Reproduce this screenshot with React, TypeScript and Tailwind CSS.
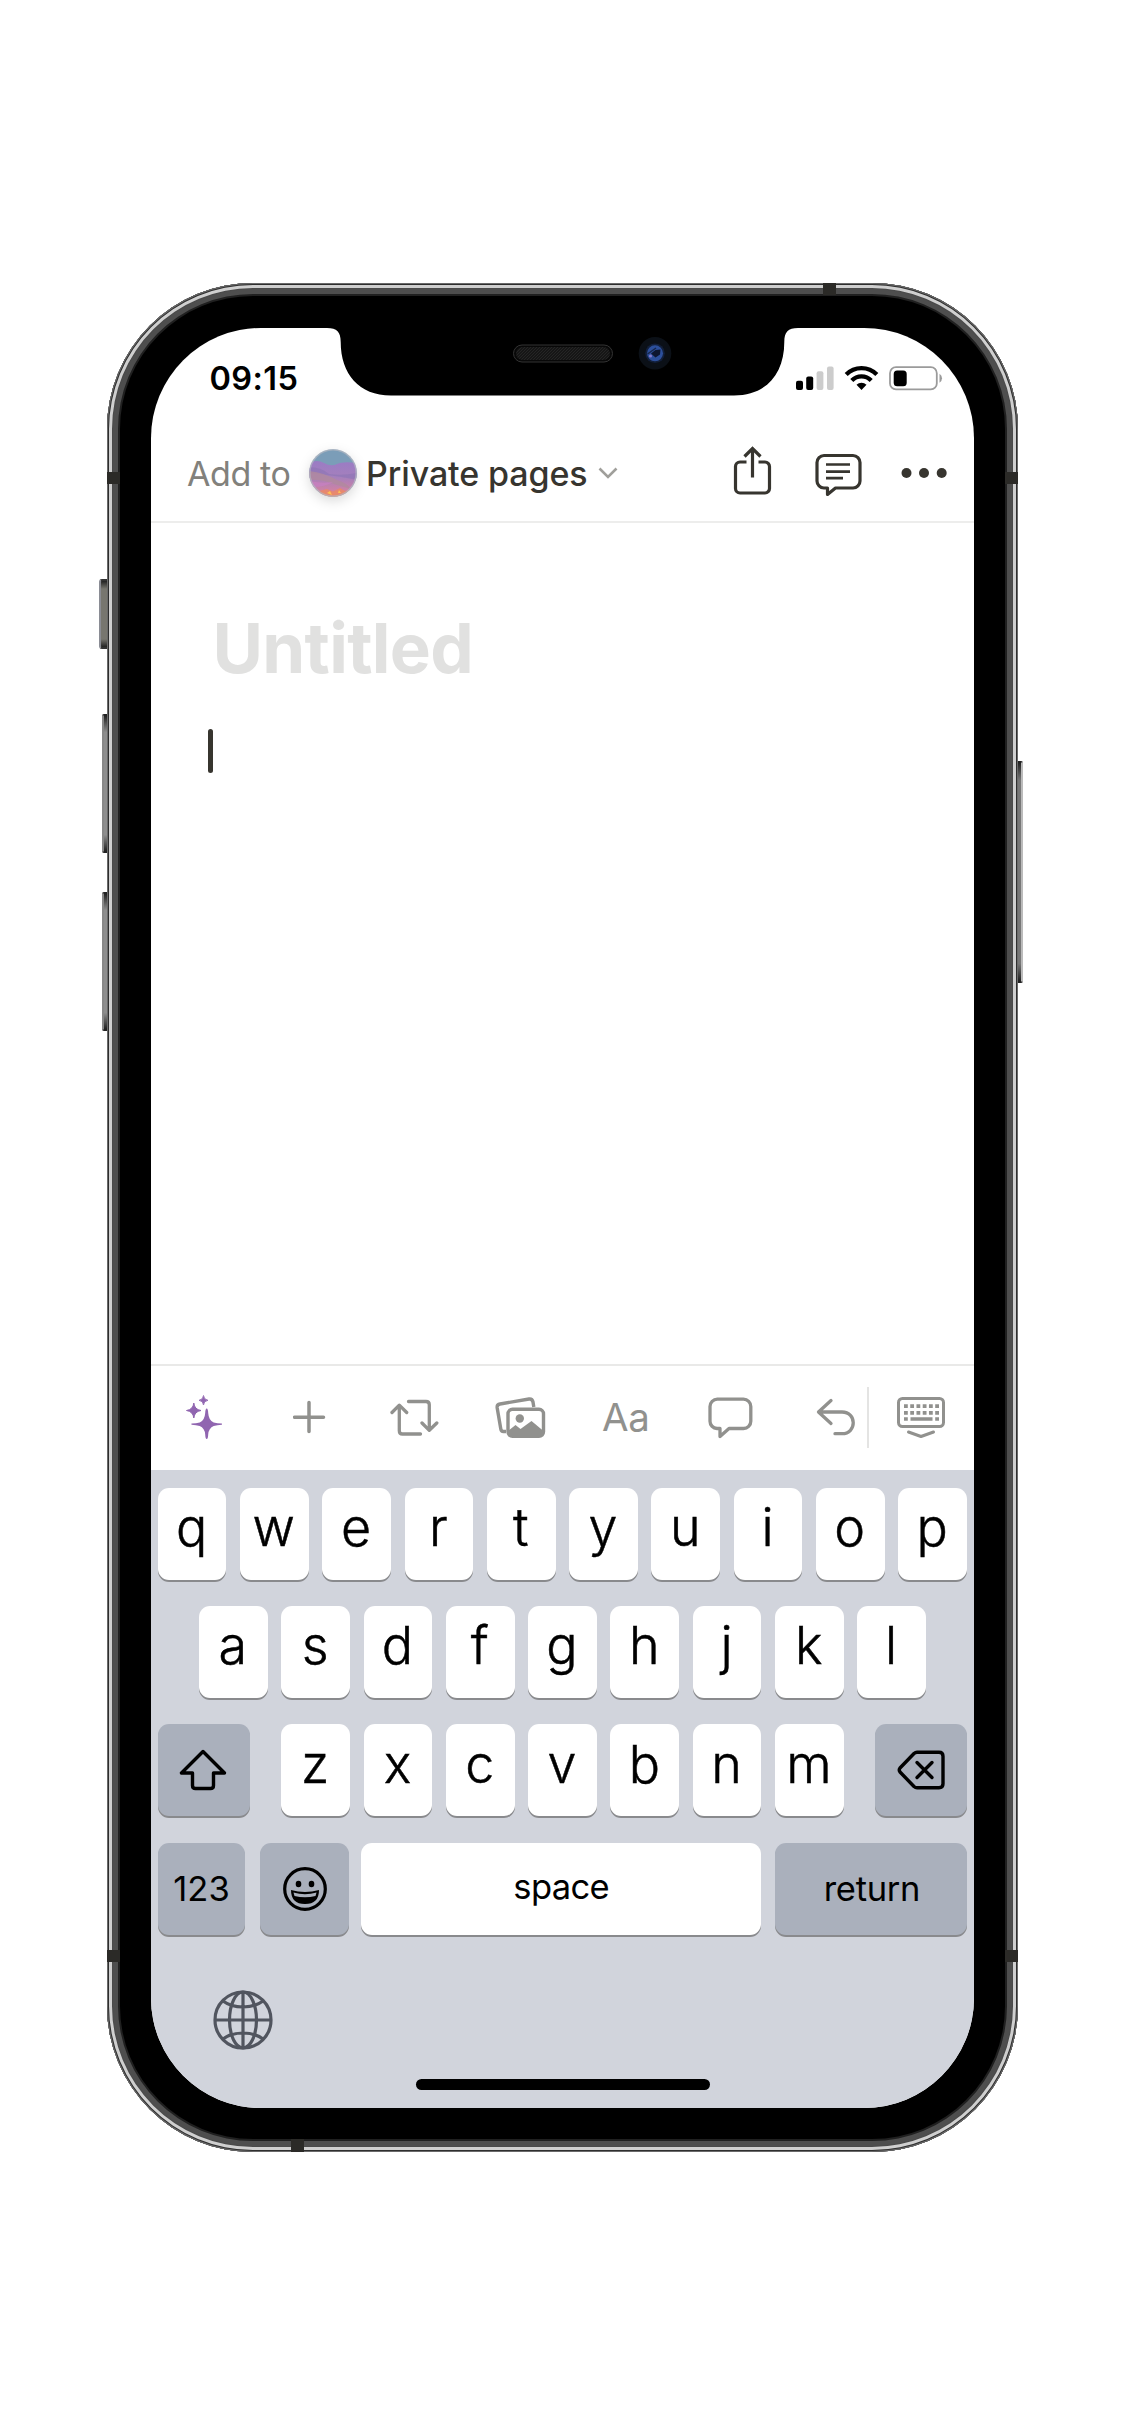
import React from "react";

const FRAME =
  "shadow-[inset_0_0_0_1px_#6a6a6a,inset_0_0_0_2px_#2e2e2e,inset_0_0_0_5px_#cfcfcf,inset_0_0_0_6px_#4a4a4a,inset_0_0_0_11px_#4e4e4e,inset_0_0_0_13px_#202020]";

function Notch() {
  return (
    <svg className="absolute left-0 top-0" width="823" height="69" viewBox="0 0 823 69">
      <path
        d="M170 0H176C186 0 189.7 4 189.7 14C189.7 46 208 67.5 240 67.5H583C615 67.5 633.3 46 633.3 14C633.3 4 637 0 647 0H653V-2H170Z"
        fill="#000"
      />
      <defs>
        <pattern id="mesh" width="3" height="3" patternUnits="userSpaceOnUse">
          <rect width="3" height="3" fill="#161616" />
          <path d="M0 3L3 0" stroke="#2a2a2a" strokeWidth="0.8" />
        </pattern>
      </defs>
      <rect x="362.500" y="17" width="99" height="17" rx="8.500" fill="#080808" stroke="#333" />
      <rect x="365" y="19" width="94" height="13" rx="6.500" fill="url(#mesh)" />
      <circle cx="504" cy="25.300" r="16.300" fill="#0b1017" />
      <circle cx="504" cy="25.300" r="9.800" fill="#121f3a" />
      <circle cx="504" cy="25.300" r="8" fill="#2c4f9b" />
      <path d="M500 25.500L504.500 22L509.500 21.500L509 26.500L504.500 29.500Z" fill="#0d1630" />
      <path d="M496.500 26L505 20" stroke="#16264c" strokeWidth="1.500" />
      <circle cx="499.500" cy="28" r="1.600" fill="#8378c8" />
    </svg>
  );
}

function StatusIcons() {
  return (
    <svg className="mt-[37px]" width="150" height="28" viewBox="0 0 150 28">
      <rect x="0" y="15.800" width="7" height="9.200" rx="2" fill="#000" />
      <rect x="10.200" y="11.500" width="7" height="13.500" rx="2" fill="#000" />
      <rect x="20.600" y="6.200" width="6.800" height="18.800" rx="2" fill="#ccc" />
      <rect x="31" y="1.500" width="6.600" height="23.500" rx="2" fill="#ccc" />
      <g fill="none" stroke="#000" strokeWidth="4.300">
        <path d="M50.200 9.600A21.500 21.500 0 0 1 80.800 9.600" />
        <path d="M55.800 15.400A13.600 13.600 0 0 1 75.200 15.400" />
      </g>
      <path d="M65.500 24.900L60.500 19.800A7.300 7.300 0 0 1 70.500 19.800Z" fill="#000" />
      <rect x="94" y="2.200" width="46.800" height="22.200" rx="6" fill="none" stroke="#9b9b9b" strokeWidth="1.800" />
      <rect x="97.700" y="5.400" width="13" height="15.800" rx="3.500" fill="#000" />
      <path d="M143.500 8.700Q146 10.200 146 13.200T143.500 17.700Z" fill="#9b9b9b" />
    </svg>
  );
}

function Avatar() {
  return (
    <svg className="overflow-visible drop-shadow-[0_4px_6px_rgba(0,0,0,0.14)]" width="48" height="48" viewBox="0 0 48 48">
      <defs>
        <clipPath id="disc"><circle cx="24" cy="24" r="23.700" /></clipPath>
        <linearGradient id="hills" x1="0" y1="0" x2="0" y2="1">
          <stop offset="0" stopColor="#9a7cc4" />
          <stop offset="0.450" stopColor="#a580bc" />
          <stop offset="0.800" stopColor="#cc82a6" />
          <stop offset="1" stopColor="#e08a86" />
        </linearGradient>
      </defs>
      <g clipPath="url(#disc)">
        <rect width="48" height="48" fill="#7b9db8" />
        <path d="M0 14Q8 10 15 14T28 15T48 14V48H0Z" fill="url(#hills)" />
        <path d="M0 18Q12 18 20 25Q32 27 48 24V31Q30 27 16 26Q8 24 0 24Z" fill="#8c74b4" opacity="0.600" />
        <path d="M0 22Q16 24 28 31Q38 34 42 40L28 36Q12 30 0 31Z" fill="#b08a9e" opacity="0.800" />
        <path d="M0 32Q14 35 24 33Q16 38 4 38Z" fill="#c77fc0" opacity="0.800" />
        <path d="M10 42L18 40L24 42.500L31 39L36 42L40 41L36 48H14Z" fill="#f08a5c" opacity="0.700" />
        <path d="M18 44L21 42L23 46ZM30 41L32 44H29Z" fill="#ffc052" />
      </g>
      <circle cx="24" cy="24" r="23.200" fill="none" stroke="#b4b8c2" strokeOpacity="0.700" strokeWidth="1.500" />
    </svg>
  );
}

function Header() {
  return (
    <header className="flex h-[98px] items-start border-b-2 border-[#ededec] pl-[36px] text-[34px] leading-[48px]">
      <span className="mt-[25px] w-[121.500px] shrink-0 whitespace-nowrap tracking-[-0.400px] text-[#82817c]">Add to</span>
      <span className="mt-[24px] h-12 w-12 shrink-0"><Avatar /></span>
      <span className="ml-[9.500px] mt-[25px] w-[222px] shrink-0 whitespace-nowrap font-medium tracking-[-0.100px] text-[#37352f]">Private pages</span>
      <svg className="ml-[9.500px] mt-[38px] shrink-0" width="20" height="20" viewBox="0 0 20 20" fill="none" stroke="#a09f9b" strokeWidth="2.600">
        <path d="M1.500 5.500L10 14L18.500 5.500" />
      </svg>
      <div className="ml-[115.500px] mt-[21px] flex text-[#37352f]">
        <svg width="40" height="50" viewBox="0 0 40 50" fill="none" stroke="currentColor" strokeWidth="3.200">
          <path d="M13.500 16H7A4.500 4.500 0 0 0 2.500 20.500V42.500A4.500 4.500 0 0 0 7 47H32A4.500 4.500 0 0 0 36.500 42.500V20.500A4.500 4.500 0 0 0 32 16H25.500" />
          <path d="M19.500 31.500V2.500M11.500 10.500L19.500 2.500L27.500 10.500" />
        </svg>
        <svg className="ml-[40.500px] mt-[6px]" width="49" height="46" viewBox="0 0 49 46" fill="none" stroke="currentColor" strokeWidth="3.200" strokeLinejoin="round">
          <path d="M11 36H13.500V42.500L21.500 36H39A7 7 0 0 0 46 29V10.500A7 7 0 0 0 39 3.500H10A7 7 0 0 0 3 10.500V29A7 7 0 0 0 10 36Z" />
          <path d="M12 12.500H36M12 19.700H36M12 26.200H29" strokeWidth="2.700" />
        </svg>
        <svg className="ml-[38px] mt-[21px]" width="46" height="12" viewBox="0 0 46 12" fill="currentColor">
          <circle cx="5.500" cy="6" r="5" /><circle cx="23" cy="6" r="5" /><circle cx="40.700" cy="6" r="5" />
        </svg>
      </div>
    </header>
  );
}

function Toolbar() {
  return (
    <div className="flex h-[106px] items-start border-t-2 border-[#e9e9e8] pl-[35px] text-[#91918e]">
      <svg className="mt-[28px] shrink-0" width="38" height="46" viewBox="0 0 38 46" fill="#9065b0">
        <path d="M20.700 14.500Q22 14.500 22.200 19Q22.700 26.500 27.700 28.500Q31.200 29.300 35.700 29.500Q36.700 30 35.700 30.700Q31.200 31 27.700 32Q22.700 34 22.200 40.500Q22 45 20.700 45Q19.400 45 19.200 40.500Q18.700 34 13.700 32Q10.200 31 5.700 30.700Q4.700 30 5.700 29.500Q10.200 29.300 13.700 28.500Q18.700 26.500 19.200 19Q19.400 14.500 20.700 14.500Z" />
        <path d="M7.800 9Q8.500 15.500 15 16.500Q8.500 17.500 7.800 24Q7.100 17.500 .5 16.500Q7.100 15.500 7.800 9Z" stroke="#9065b0" />
        <path d="M17.500 1.500Q17.800 5.500 22 6.300Q17.800 7 17.500 11Q17.200 7 13 6.300Q17.200 5.500 17.500 1.500Z" stroke="#9065b0" strokeWidth="0.800" />
      </svg>
      <svg className="ml-[68.500px] mt-[34px] shrink-0" width="33" height="34" viewBox="0 0 33 34" stroke="currentColor" strokeWidth="3.500" strokeLinecap="round">
        <path d="M16 2.500V31.500M1.500 17.200H30.500" />
      </svg>
      <svg className="ml-[64.500px] mt-[32px] shrink-0" width="50" height="40" viewBox="0 0 50 40" fill="none" stroke="currentColor" strokeWidth="3.300" strokeLinecap="round" strokeLinejoin="round">
        <path d="M18.500 3.500H36Q39.300 3.500 39.300 6.800V32M32 25L39.300 32.300L46.800 25M30.500 36H12.500Q9.300 36 9.300 32.700V8M2 14.500L9.300 7.200L16.700 14.500" />
      </svg>
      <svg className="ml-[55px] mt-[30px] shrink-0" width="52" height="43" viewBox="0 0 52 43" fill="none" stroke="currentColor" strokeWidth="3.400">
        <path d="M11 35.500H8.500Q6.200 35.500 5.800 33L2.200 12Q1.700 8.500 5 8L34 3Q37.200 2.500 38 6L38.800 11" />
        <rect x="13" y="13.300" width="35.500" height="27" rx="4.500" />
        <circle cx="24.800" cy="22.500" r="4.200" fill="currentColor" stroke="none" />
        <path d="M13 35L20.500 29L25.500 33L36.500 25L48.500 35V37Q48.500 40.500 44.500 40.500H17Q13 40.500 13 37Z" fill="currentColor" stroke="none" />
      </svg>
      <span className="ml-[55px] mt-[28px] w-[48px] shrink-0 whitespace-nowrap text-[38.500px] leading-[46px] tracking-[-0.300px]">Aa</span>
      <svg className="ml-[57px] mt-[30px] shrink-0" width="47" height="43" viewBox="0 0 47 43" fill="none" stroke="currentColor" strokeWidth="3.300" strokeLinejoin="round">
        <path d="M10 32.500H13V40.500L22 32.500H36.500A7.300 7.300 0 0 0 43.800 25.200V10.500A7.300 7.300 0 0 0 36.500 3.200H10.300A7.300 7.300 0 0 0 3 10.500V25.200A7.300 7.300 0 0 0 10 32.500Z" />
      </svg>
      <svg className="ml-[62px] mt-[32px] shrink-0" width="40" height="40" viewBox="0 0 40 40" fill="none" stroke="currentColor" strokeWidth="3.300" strokeLinecap="round" strokeLinejoin="round">
        <path d="M15 2.500L2.500 14L15 25.500M2.500 14H26C41 14 41 35.700 26 35.700H19" />
      </svg>
      <div className="ml-[11px] mt-[21px] h-[61px] w-[2px] shrink-0 bg-[#e4e4e3]" />
      <svg className="ml-[27px] mt-[30px] shrink-0" width="50" height="43" viewBox="0 0 50 43" fill="none" stroke="currentColor" strokeWidth="3">
        <rect x="2.500" y="2.500" width="45" height="28" rx="4" />
        <path d="M8 10.200H43M8 16.800H43" strokeWidth="3.800" strokeDasharray="3.800 2.440" />
        <path d="M8 23H11.800M14.500 23H36.500M39.200 23H43" strokeWidth="3.600" />
        <path d="M12.500 36L25 40.500L37.500 36" strokeLinecap="round" strokeLinejoin="round" />
      </svg>
    </div>
  );
}

const KEY = "flex h-[92px] shrink-0 justify-center rounded-[11px] text-black shadow-[0_2px_0_#898a8d]";

function Letter({ c }: { c: string }) {
  return <div className={KEY + " w-[68.700px] bg-white pr-[1px] pt-[8.500px] text-[52px] font-light leading-[64px] [-webkit-text-stroke:0.5px_black]"}>{c}</div>;
}

function Letters({ row }: { row: string }) {
  return (
    <div className="flex gap-[13.600px]">
      {row.split("").map((c) => <Letter key={c} c={c} />)}
    </div>
  );
}

function Keyboard() {
  return (
    <div className="flex grow flex-col bg-[#d1d4dc] pl-[6.700px] pr-[6.700px] pt-[17.600px]">
      <div className="flex flex-col gap-[26.400px]">
        <Letters row="qwertyuiop" />
        <div className="flex justify-center"><Letters row="asdfghjkl" /></div>
        <div className="flex justify-between">
          <div className={KEY + " w-[92px] items-center bg-[#aab0bc]"}>
            <svg className="mr-[1px] -mt-[1px]" width="48" height="42" viewBox="0 0 48 42" fill="none" stroke="#000" strokeWidth="3.400" strokeLinejoin="round">
              <path d="M24 2.500L2.500 24H13.500V36.500Q13.500 39.500 16.500 39.500H31.500Q34.500 39.500 34.500 36.500V24H45.500Z" />
            </svg>
          </div>
          <Letters row="zxcvbnm" />
          <div className={KEY + " w-[92px] items-center bg-[#aab0bc]"}>
            <svg className="mr-[1px]" width="50" height="40" viewBox="0 0 50 40" fill="none" stroke="#000" strokeWidth="3.400" strokeLinejoin="round">
              <path d="M21 2.200H43Q47 2.200 47 6.200V33.800Q47 37.800 43 37.800H21Q19.500 37.800 18 36.500L4 22Q2.500 20 4 18L18 3.500Q19.500 2.200 21 2.200Z" />
              <path d="M21 12.500L36 27.500M36 12.500L21 27.500" strokeLinecap="round" />
            </svg>
          </div>
        </div>
        <div className="flex text-[34.500px] leading-[92px]">
          <div className={KEY + " w-[87.700px] bg-[#aab0bc]"}>123</div>
          <div className={KEY + " ml-[14.300px] w-[89.700px] items-center bg-[#aab0bc]"}>
            <svg width="46" height="46" viewBox="0 0 46 46">
              <circle cx="23" cy="23" r="20.300" fill="none" stroke="#000" strokeWidth="3.200" />
              <ellipse cx="16.500" cy="18" rx="2.800" ry="3.200" />
              <ellipse cx="29.500" cy="18" rx="2.800" ry="3.200" />
              <path d="M9 24Q23 28 37 24Q37 38 23 38T9 24Z" />
              <path d="M11.500 26.500Q23 30 34.500 26.500L33.500 30Q23 32.500 12.500 30Z" fill="#aab0bc" />
            </svg>
          </div>
          <div className={KEY + " ml-[12px] w-[399.700px] bg-white leading-[88px] tracking-[-0.600px]"}>space</div>
          <div className={KEY + " ml-[14px] w-[191.700px] bg-[#aab0bc] pl-[2px] tracking-[-0.300px]"}>return</div>
        </div>
      </div>
      <svg className="ml-[55px] mt-[55px]" width="60" height="60" viewBox="0 0 60 60" fill="none" stroke="#51555f" strokeWidth="3.200">
        <circle cx="30" cy="30" r="28" />
        <ellipse cx="30" cy="30" rx="13.500" ry="28" />
        <path d="M30 2V58M2 30H58M10 11Q18 17 30 17T50 11M10 49Q18 43 30 43T50 49" />
      </svg>
      <div className="ml-[258px] mt-[29.500px] h-[11px] w-[294px] rounded-full bg-black" />
    </div>
  );
}

export default function App() {
  return (
    <main className="flex h-[2436px] w-[1125px] overflow-hidden bg-white font-['Inter',sans-serif]">
      <div className="relative ml-[107px] mt-[283px] h-[1869px] w-[911px]">
        <div className="absolute left-[-8px] top-[296px] h-[70px] w-[9px] rounded-l-[3px] border-y-2 border-l-2 border-[#333] border-l-[#8a8c94] bg-[linear-gradient(#222,#77766f_12%,#77766f_88%,#222)]" />
        <div className="absolute left-[-5px] top-[431px] h-[139px] w-[6px] rounded-l-[2px] border-y-2 border-l-2 border-[#222] border-l-[#888] bg-[linear-gradient(#222,#8e8e8e_12%,#8e8e8e_88%,#222)]" />
        <div className="absolute left-[-5px] top-[609px] h-[139px] w-[6px] rounded-l-[2px] border-y-2 border-l-2 border-[#222] border-l-[#888] bg-[linear-gradient(#222,#8e8e8e_12%,#8e8e8e_88%,#222)]" />
        <div className="absolute right-[-5px] top-[478px] h-[222px] w-[6px] rounded-r-[2px] border-y-2 border-r-2 border-[#222] border-r-[#bbb] bg-[linear-gradient(#222,#777_8%,#777_92%,#222)]" />
        <div className={"relative h-full rounded-[146px] bg-black pl-[44px] pt-[45px] " + FRAME}>
          <div className="absolute left-[716px] top-0 h-[12px] w-[13px] bg-[#2b2a27]" />
          <div className="absolute bottom-0 left-[184px] h-[13px] w-[13px] bg-[#2b2a27]" />
          <div className="absolute left-0 top-[189px] h-[12px] w-[13px] bg-[#2b2a27]" />
          <div className="absolute right-0 top-[189px] h-[12px] w-[13px] bg-[#2b2a27]" />
          <div className="absolute left-0 top-[1667px] h-[12px] w-[13px] bg-[#2b2a27]" />
          <div className="absolute right-0 top-[1667px] h-[12px] w-[13px] bg-[#2b2a27]" />
          <div className="relative flex h-[1779.500px] w-[823px] flex-col overflow-hidden rounded-[110px] bg-white">
            <Notch />
            <div className="flex h-[97px] shrink-0 items-start">
              <span className="ml-[58.500px] mt-[31px] w-[586.500px] shrink-0 text-[32.500px] font-semibold leading-[40px] tracking-[0.400px] text-black">09:15</span>
              <StatusIcons />
            </div>
            <Header />
            <div className="flex h-[841px] shrink-0 flex-col items-start">
              <h1 className="ml-[61.500px] mt-[83px] text-[69px] font-bold leading-[84px] tracking-[-0.700px] text-[#e1e1e0]">Untitled</h1>
              <div className="ml-[57px] mt-[39px] h-[44px] w-[5px] rounded-full bg-[#37352f]" />
            </div>
            <Toolbar />
            <Keyboard />
          </div>
        </div>
      </div>
    </main>
  );
}
